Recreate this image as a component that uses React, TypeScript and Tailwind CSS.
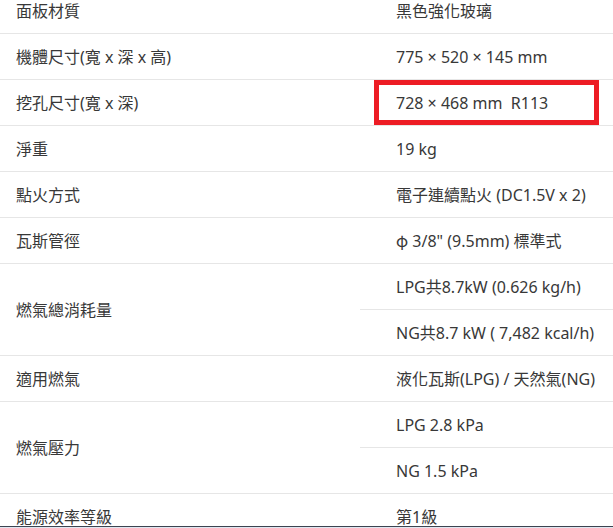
import type { ReactNode } from "react";

type Spec = { label: string; values: ReactNode[] };

const cjk = { fontFamily: '"Noto Sans CJK TC", sans-serif' };

const specs: Spec[] = [
  { label: "面板材質", values: ["黑色強化玻璃"] },
  { label: "機體尺寸(寬 x 深 x 高)", values: ["775 × 520 × 145 mm"] },
  { label: "挖孔尺寸(寬 x 深)", values: ["728 × 468 mm\u00a0\u00a0R113"] },
  { label: "淨重", values: ["19 kg"] },
  { label: "點火方式", values: ["電子連續點火 (DC1.5V x 2)"] },
  {
    label: "瓦斯管徑",
    values: [
      <>
        <span style={cjk}>φ</span>
        {" 3/8\" (9.5mm) 標準式"}
      </>,
    ],
  },
  { label: "燃氣總消耗量", values: ["LPG共8.7kW (0.626 kg/h)", "NG共8.7 kW ( 7,482 kcal/h)"] },
  { label: "適用燃氣", values: ["液化瓦斯(LPG) / 天然氣(NG)"] },
  { label: "燃氣壓力", values: ["LPG 2.8 kPa", "NG 1.5 kPa"] },
  { label: "能源效率等級", values: ["第1級"] },
];

function SpecRow({ label, values }: Spec) {
  return (
    <div className="flex border-b border-[#e6e6e6]">
      <div className="w-[360px] shrink-0 pl-4 flex items-center">{label}</div>
      <div className="flex-1 flex flex-col">
        {values.map((v, i) => (
          <div
            key={i}
            className={
              i < values.length - 1
                ? "h-[46px] pl-9 flex items-center whitespace-pre border-b border-[#e6e6e6]"
                : "h-[45px] pl-9 flex items-center whitespace-pre"
            }
          >
            <span>{v}</span>
          </div>
        ))}
      </div>
    </div>
  );
}

export default function App() {
  return (
    <div
      className="relative w-[613px] h-[528px] overflow-hidden bg-white text-[16px] text-[#383838]"
      style={{ fontFamily: '"Noto Sans", "Noto Sans CJK TC", sans-serif' }}
    >
      <div className="-mt-[12px]">
        {specs.map((s) => (
          <SpecRow key={s.label} {...s} />
        ))}
      </div>

      {/* highlight box around cut-out size */}
      <div className="absolute left-[374px] top-[80px] w-[225px] h-[45px] border-[5px] border-[#ed1c24]" />

      <div className="absolute left-0 right-0 bottom-[1px] h-px bg-[#3d4350]" />
      <div className="absolute left-0 right-0 bottom-0 h-px bg-[#dfe7f0]" />
    </div>
  );
}
